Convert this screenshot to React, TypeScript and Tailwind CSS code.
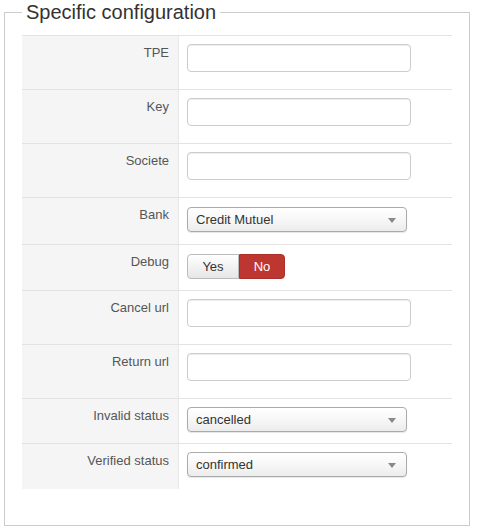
import React from "react";

const font = { fontFamily: '"Liberation Sans", Arial, sans-serif' };

function Caret() {
  return (
    <svg width="8" height="5" viewBox="0 0 8 5" className="absolute right-[10px] top-[10px]">
      <path d="M0 0 L8 0 L4 5 Z" fill="#888" />
    </svg>
  );
}

function TextInput() {
  return (
    <div className="mt-0 h-[28px] w-[224px] rounded-[4px] border border-[#cccccc] bg-white shadow-[inset_0_1px_1px_rgba(0,0,0,0.075)]" />
  );
}

function Select({ value }: { value: string }) {
  return (
    <div className="relative h-[25px] w-[220px] rounded-[4px] border border-[#aaaaaa] bg-gradient-to-b from-white via-[#f7f7f7] to-[#ececec] pl-[8px] text-[13px] leading-[23px] text-[#333] shadow-[0_1px_1px_rgba(0,0,0,0.1)]">
      {value}
      <Caret />
    </div>
  );
}

function Toggle() {
  return (
    <div className="mt-[1px] flex h-[25px] text-[13px] leading-[23px]">
      <div className="w-[52px] rounded-l-[4px] border border-[#bbbbbb] bg-gradient-to-b from-white to-[#e6e6e6] text-center text-[#333]">
        Yes
      </div>
      <div className="w-[46px] rounded-r-[4px] border border-[#a9302a] bg-[#bd362f] text-center text-white">
        No
      </div>
    </div>
  );
}

type Row = { label: string; h: string; control: React.ReactNode; pt?: string };

const rows: Row[] = [
  { label: "TPE", h: "h-[54px]", control: <TextInput /> },
  { label: "Key", h: "h-[54px]", control: <TextInput /> },
  { label: "Societe", h: "h-[54px]", control: <TextInput /> },
  { label: "Bank", h: "h-[47px]", control: <div className="pt-[1px]"><Select value="Credit Mutuel" /></div> },
  { label: "Debug", h: "h-[46px]", control: <Toggle /> },
  { label: "Cancel url", h: "h-[54px]", control: <TextInput /> },
  { label: "Return url", h: "h-[54px]", control: <TextInput /> },
  { label: "Invalid status", h: "h-[45px]", control: <Select value="cancelled" /> },
  { label: "Verified status", h: "h-[46px]", control: <Select value="confirmed" /> },
];

export default function App() {
  return (
    <div className="h-[531px] w-[478px] bg-white" style={font}>
      <fieldset className="ml-[4px] w-[466px] border border-[#cccccc] px-[17px] pb-[36px] pt-[11px]">
        <legend className="px-[4px] text-[20px] leading-[24px] text-[#333]">Specific configuration</legend>
        <div className="flex flex-col">
          {rows.map((r) => (
            <div key={r.label} className={`flex border-t border-[#e3e3e3] ${r.h}`}>
              <div className="w-[157px] border-r border-[#e8e8e8] bg-[#f5f5f5] pr-[9px] pt-[8px] text-right text-[13px] leading-[18px] text-[#555]">
                {r.label}
              </div>
              <div className="flex-1 pl-[8px] pt-[8px]">{r.control}</div>
            </div>
          ))}
        </div>
      </fieldset>
    </div>
  );
}
